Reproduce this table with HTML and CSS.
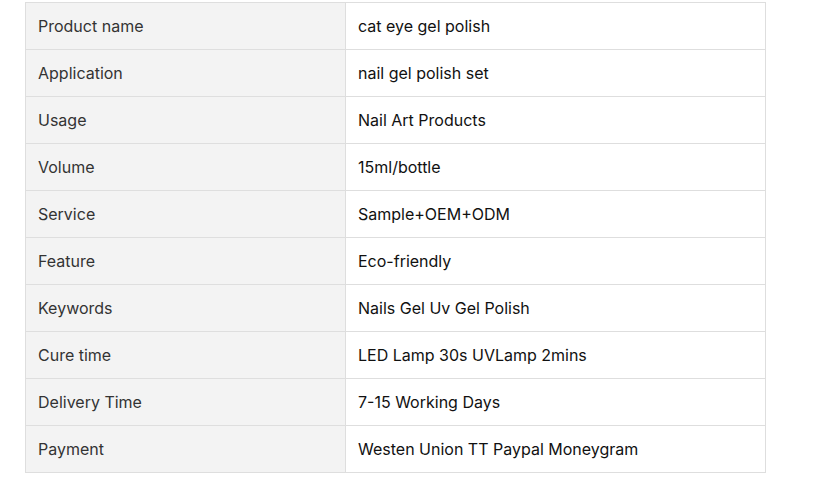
FILE: index.html
```
<!DOCTYPE html>
<html>
<head>
<meta charset="utf-8">
<link rel="stylesheet" href="styles.css">
</head>
<body>
<table class="spec">
<tbody>
<tr><td class="k">Product name</td><td class="v">cat eye gel polish</td></tr>
<tr><td class="k">Application</td><td class="v">nail gel polish set</td></tr>
<tr><td class="k">Usage</td><td class="v">Nail Art Products</td></tr>
<tr><td class="k">Volume</td><td class="v">15ml/bottle</td></tr>
<tr><td class="k">Service</td><td class="v">Sample+OEM+ODM</td></tr>
<tr><td class="k">Feature</td><td class="v">Eco-friendly</td></tr>
<tr><td class="k">Keywords</td><td class="v">Nails Gel Uv Gel Polish</td></tr>
<tr><td class="k">Cure time</td><td class="v">LED Lamp 30s UVLamp 2mins</td></tr>
<tr><td class="k">Delivery Time</td><td class="v">7-15 Working Days</td></tr>
<tr><td class="k">Payment</td><td class="v">Westen Union TT Paypal Moneygram</td></tr>
</tbody>
</table>
</body>
</html>
```
FILE: styles.css
```
html, body {
  margin: 0;
  padding: 0;
  background: #fff;
}
body {
  font-family: Inter, "Noto Sans", sans-serif;
  font-size: 16px;
}
.spec {
  margin: 2px 0 0 25px;
  width: 741px;
  border-collapse: collapse;
  table-layout: fixed;
}
.spec td {
  border: 1px solid #dedede;
  padding: 12px 12px;
  line-height: 22px;
  height: 22px;
  vertical-align: middle;
}
.spec .k {
  width: 295px;
  background: #f3f3f3;
  color: #333;
  font-weight: 400;
}
.spec .v {
  color: #111;
  font-weight: 400;
}
```
